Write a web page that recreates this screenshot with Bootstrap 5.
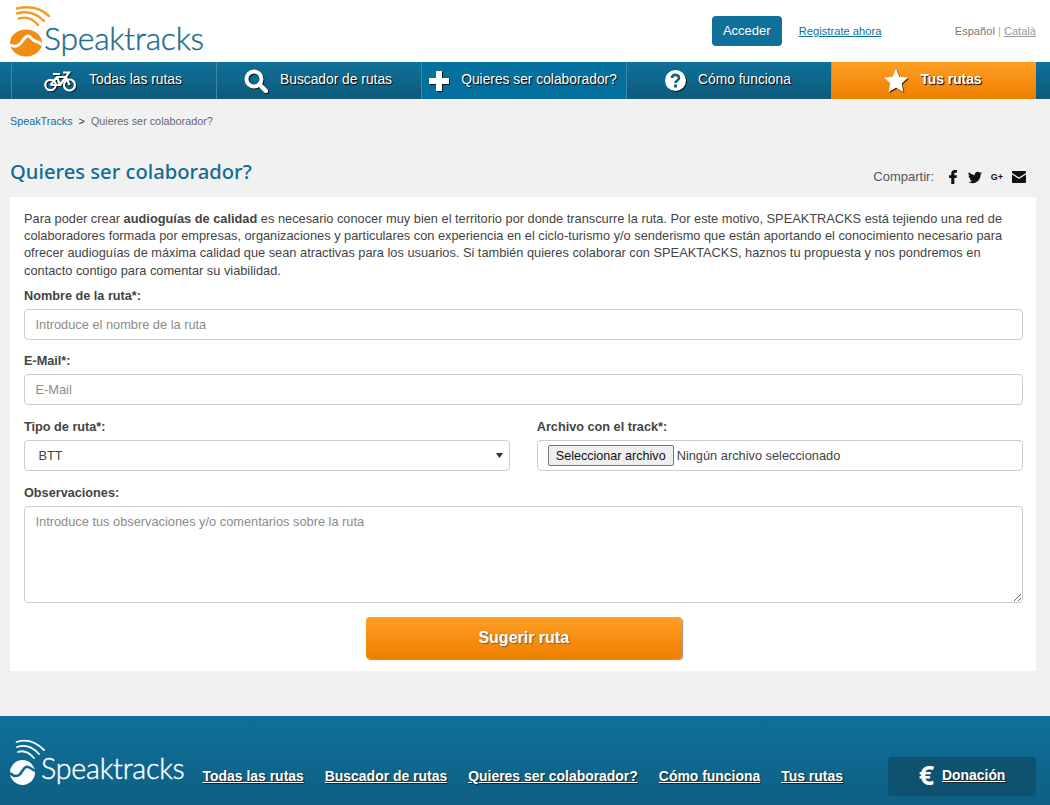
<!DOCTYPE html>
<html lang="es">
<head>
    <meta charset="UTF-8">
    <meta name="viewport" content="width=device-width, initial-scale=1.0">
    <title>Quieres ser colaborador?</title>
    <link href="https://cdn.jsdelivr.net/npm/bootstrap@5.3.0/dist/css/bootstrap.min.css" rel="stylesheet">
    <style>
        body { background: #f1f1f1; font-family: "Liberation Sans", Arial, sans-serif; font-size: 12.8px; color: #444; }
        .top-head { height: 62px; background: #fff; padding: 0 14px 0 10px; }
        .logo-box { color: #1c6d8f; height: 62px; padding-top: 3px; }
        .logo-word { font-family: Lato, sans-serif; font-weight: 300; font-size: 31.8px; line-height: 1; letter-spacing: -.2px; margin-left: 1px; margin-bottom: 7px; -webkit-text-stroke: .4px currentColor; }
        .logo-mark { width: 33px; height: 56px; overflow: visible; }
        .btn-enter { background: #0f7099; color: #fff; font-size: 13px; width: 70px; height: 30px; padding: 0; border: 0; border-radius: 4px; }
        .reg-link { color: #0f7099; font-size: 11.2px; margin-left: 17px; width: 156px; }
        .lang-box { font-size: 11.1px; color: #777; }
        .lang-box a { color: #999; }
        .lang-box span { color: #f0a040; }
        .main-nav { height: 37px; padding-left: 11px; background: linear-gradient(#0f7099, #0e5a7a); }
        .main-nav a { width: 205px; padding-right: 2px; color: #fff; font-size: 13.8px; text-decoration: none; text-shadow: 1px 1px 1px #000; border-left: 1px solid #3c86a7; }
        .main-nav a span { margin-top: -1px; }
        .main-nav a.is-current { background: #04709f; }
        .main-nav a.is-orange { background: linear-gradient(#fe9f25, #ee7f00); font-weight: 700; border-left-color: #d98a20; }
        .main-nav svg { filter: drop-shadow(1px 1px 0 rgba(0,0,0,.75)); }
        .crumbs { padding: 14px 10px 0; height: 50px; }
        .crumbs .breadcrumb { --bs-breadcrumb-divider: ">"; --bs-breadcrumb-item-padding-x: 6px; --bs-breadcrumb-divider-color: #333; font-size: 10.8px; margin: 0; }
        .crumbs a { color: #0f7099; text-decoration: none; }
        .crumbs .active { color: #667; }
        .title-row { padding: 0 24px 0 10px; height: 48px; }
        .title-row h1 { font-family: "Noto Sans", sans-serif; font-size: 20.2px; font-weight: 500; color: #0f6d94; margin: 10px 0 0; }
        .share-box { color: #555; padding-top: 18px; font-size: 13px; }
        .share-box svg, .share-box b { color: #111; fill: #111; }
        .share-box b { font-size: 9px; width: 14px; text-align: center; padding-top: 1px; }
        .form-panel { background: #fff; margin: 0 14px 0 10px; padding: 13px 13.5px 12px 14px; }
        .form-panel p { line-height: 17.2px; margin: 0 0 9.4px; }
        .form-panel label { display: block; font-weight: 700; font-size: 12.7px; line-height: 17px; margin-bottom: 4px; }
        .form-panel .form-control, .form-panel .form-select { font-size: 12.8px; color: #444; border-color: #ccc; height: 31px; padding: 0 10.5px; border-radius: 4px; box-shadow: none; }
        .form-panel .form-control::placeholder { color: #8b8b8b; }
        .form-panel textarea.form-control { height: 97px; padding-top: 5px; resize: vertical; }
        .form-panel .form-select { padding-left: 13.5px; background-size: 7px 5px; background-position: right 6px center; background-image: url("data:image/svg+xml,%3csvg xmlns='http://www.w3.org/2000/svg' viewBox='0 0 7 5'%3e%3cpath fill='%23333' d='M0 0h7L3.5 5z'/%3e%3c/svg%3e"); }
        .gap-first { margin-bottom: 13px; }
        .gap-next { margin-bottom: 14px; }
        .file-box { padding: 0 0 0 10px !important; gap: 3px; }
        .file-btn { background: #efefef; border: 1px solid #767676; border-radius: 2px; font-size: 12.6px; color: #111; height: 21px; padding: 0 7px; line-height: 18px; }
        .form-panel .row { --bs-gutter-x: 27px; }
        .send-btn { width: 316px; height: 42px; background: linear-gradient(#fe9f25, #ee7f00); color: #fff; font-size: 16px; font-weight: 700; border: 0; border-radius: 4px; text-shadow: 1px 1px 1px #7a5a30; box-shadow: 1px 1px 1px #a98d70; margin: 14px 0 0 1px; }
        .site-foot { margin-top: 45px; height: 89px; background: linear-gradient(#0f7099, #0e5f83); padding: 0 14px 0 10px; color: #fff; }
        .foot-logo { color: #fff; padding-top: 21px; }
        .foot-logo .logo-mark { width: 36px; height: 48px; }
        .foot-logo .logo-word { font-size: 28.6px; margin: 0 0 3px -5px; }
        .foot-links { gap: 21px; padding-top: 52px; margin-left: 18px; }
        .foot-links a { color: #fff; font-weight: 700; font-size: 13.95px; line-height: 16px; text-shadow: 1px 1px 1px #222; }
        .donate-box { margin-left: auto; margin-top: 41px; width: 148px; height: 39px; background: #0f5270; border-radius: 4px; gap: 8px; }
        .donate-box span { font-size: 27px; font-weight: 700; line-height: 1; font-family: "Open Sans", sans-serif; margin-top: -4px; }
        .donate-box a { color: #fff; font-weight: 700; font-size: 13.9px; text-shadow: 1px 1px 1px #222; margin-top: -2px; }
    </style>
</head>
<body>

<header class="top-head d-flex align-items-center">
    <div class="logo-box d-flex align-items-end">
        <svg class="logo-mark" viewBox="0 0 33 56">
            <g fill="none" stroke="#f59a23" stroke-width="2.4" stroke-linecap="round">
                <path d="M7 2.500Q26 -2 39 10"/>
                <path d="M7 7.500Q22 3 34 15"/>
                <path d="M9 12.500Q20 9 28 19"/>
            </g>
            <ellipse cx="16" cy="37" rx="16" ry="13.500" fill="#f28c13"/>
            <path d="M0 39C4 41 7 41 10 38S15 30 18 30 22 34 25 35 30 36 32 39" fill="none" stroke="#fff" stroke-width="3"/>
        </svg>
        <span class="logo-word">Speaktracks</span>
    </div>
    <div class="ms-auto d-flex align-items-center">
        <button class="btn-enter">Acceder</button>
        <a href="#" class="reg-link">Registrate ahora</a>
        <div class="lang-box">Español <span>|</span> <a href="#">Català</a></div>
    </div>
</header>

<nav class="main-nav d-flex">
    <a href="#" class="d-flex align-items-center justify-content-center gap-2">
        <svg width="33" height="22" viewBox="0 0 33 22" fill="none" stroke="#fff" stroke-width="2.2"><circle cx="6.5" cy="15" r="5.200"/><circle cx="25.500" cy="15" r="5.500"/><path d="M6.500 15L13 7H22L25.500 15M13 7L16 15H6.500M16 15L22 7M9 4H16M19 2.500H25L22 7"/></svg>
        <span class="ms-1">Todas las rutas</span>
    </a>
    <a href="#" class="d-flex align-items-center justify-content-center gap-2">
        <svg width="24" height="24" viewBox="0 0 24 24" fill="none" stroke="#fff"><circle cx="10" cy="10" r="7.5" stroke-width="4"/><path d="M15.5 15.5L22 22" stroke-width="4.5" stroke-linecap="round"/></svg>
        <span class="ms-1">Buscador de rutas</span>
    </a>
    <a href="#" class="is-current d-flex align-items-center justify-content-center gap-2">
        <svg width="20" height="20" viewBox="0 0 20 20" fill="#fff"><path d="M7 0H13V7H20V13H13V20H7V13H0V7H7Z"/></svg>
        <span class="ms-1">Quieres ser colaborador?</span>
    </a>
    <a href="#" class="d-flex align-items-center justify-content-center gap-2">
        <svg width="21" height="21" viewBox="0 0 21 21"><circle cx="10.5" cy="10.5" r="10.5" fill="#fff"/><path d="M7 8C7 3.8 14 3.8 14 8C14 10.500 10.500 10.500 10.500 13" fill="none" stroke="#125f80" stroke-width="2.6"/><rect x="9" y="14.500" width="3" height="3" fill="#125f80"/></svg>
        <span class="ms-1">Cómo funciona</span>
    </a>
    <a href="#" class="is-orange d-flex align-items-center justify-content-center gap-2">
        <svg width="24" height="23" viewBox="0 0 24 23" fill="#fff"><path d="M12 0L15.500 7.700 24 8.700 17.700 14.400 19.400 23 12 18.700 4.600 23 6.300 14.400 0 8.700 8.500 7.700Z"/></svg>
        <span class="ms-1">Tus rutas</span>
    </a>
</nav>

<div class="crumbs">
    <ol class="breadcrumb">
        <li class="breadcrumb-item"><a href="#">SpeakTracks</a></li>
        <li class="breadcrumb-item active">Quieres ser colaborador?</li>
    </ol>
</div>

<div class="title-row d-flex justify-content-between">
    <h1>Quieres ser colaborador?</h1>
    <div class="share-box d-flex align-items-center gap-2 align-self-start">
        <span class="me-1">Compartir:</span>
        <svg width="14" height="14" viewBox="0 0 16 16"><path d="M6 16V9H3.500V6H6V4C6 1.500 7.500 0 10 0H12.500V3H10.800C9.800 3 9.500 3.500 9.500 4.300V6H12.500L12 9H9.500V16Z"/></svg>
        <svg width="14" height="14" viewBox="0 0 16 16"><path d="M5.026 15c6.038 0 9.341-5.003 9.341-9.334 0-.14 0-.282-.006-.422A6.685 6.685 0 0 0 16 3.542a6.658 6.658 0 0 1-1.889.518 3.301 3.301 0 0 0 1.447-1.817 6.533 6.533 0 0 1-2.087.793A3.286 3.286 0 0 0 7.875 6.03a9.325 9.325 0 0 1-6.767-3.429 3.289 3.289 0 0 0 1.018 4.382A3.323 3.323 0 0 1 .64 6.575v.045a3.288 3.288 0 0 0 2.632 3.218 3.203 3.203 0 0 1-.865.115 3.23 3.23 0 0 1-.614-.057 3.283 3.283 0 0 0 3.067 2.277A6.588 6.588 0 0 1 .78 13.58a6.32 6.32 0 0 1-.78-.045A9.344 9.344 0 0 0 5.026 15z"/></svg>
        <b>G+</b>
        <svg width="14" height="12" viewBox="0 0 14 12"><path d="M1 0H13C13.600 0 14 .4 14 1V2L7 6.500 0 2V1C0 .4.400 0 1 0ZM0 3.500L7 8 14 3.500V11C14 11.600 13.600 12 13 12H1C.4 12 0 11.600 0 11Z"/></svg>
    </div>
</div>

<main class="form-panel">
    <p>Para poder crear <strong>audioguías de calidad</strong> es necesario conocer muy bien el territorio por donde transcurre la ruta. Por este motivo, SPEAKTRACKS está tejiendo una red de colaboradores formada por empresas, organizaciones y particulares con experiencia en el ciclo-turismo y/o senderismo que están aportando el conocimiento necesario para ofrecer audioguías de máxima calidad que sean atractivas para los usuarios. Si también quieres colaborar con SPEAKTACKS, haznos tu propuesta y nos pondremos en contacto contigo para comentar su viabilidad.</p>
    <form>
        <div class="gap-first">
            <label for="nombre">Nombre de la ruta*:</label>
            <input id="nombre" class="form-control" type="text" placeholder="Introduce el nombre de la ruta">
        </div>
        <div class="gap-next">
            <label for="mail">E-Mail*:</label>
            <input id="mail" class="form-control" type="text" placeholder="E-Mail">
        </div>
        <div class="row gap-next">
            <div class="col-6">
                <label for="tipo">Tipo de ruta*:</label>
                <select id="tipo" class="form-select"><option>BTT</option></select>
            </div>
            <div class="col-6">
                <label>Archivo con el track*:</label>
                <div class="form-control file-box d-flex align-items-center">
                    <button type="button" class="file-btn">Seleccionar archivo</button>
                    <span>Ningún archivo seleccionado</span>
                </div>
            </div>
        </div>
        <div>
            <label for="obs">Observaciones:</label>
            <textarea id="obs" class="form-control" placeholder="Introduce tus observaciones y/o comentarios sobre la ruta"></textarea>
        </div>
        <div class="text-center">
            <button type="button" class="send-btn">Sugerir ruta</button>
        </div>
    </form>
</main>

<footer class="site-foot d-flex">
    <div class="foot-logo d-flex align-items-end align-self-start">
        <svg class="logo-mark" viewBox="0 0 36 48">
            <g fill="none" stroke="#fff" stroke-width="1.800" stroke-linecap="round">
                <path d="M6.500 5Q21 0 34 13"/>
                <path d="M7 10Q19 6 29 17"/>
                <path d="M8 15Q16 12 24 21"/>
            </g>
            <circle cx="12.500" cy="35.500" r="12.500" fill="#fff"/>
            <path d="M0 36C3 39 6 40 9 38S13 31 16 30 21 32 25 34" fill="none" stroke="#0f6890" stroke-width="2.500"/>
        </svg>
        <span class="logo-word">Speaktracks</span>
    </div>
    <div class="foot-links d-flex align-self-start">
        <a href="#">Todas las rutas</a>
        <a href="#">Buscador de rutas</a>
        <a href="#">Quieres ser colaborador?</a>
        <a href="#">Cómo funciona</a>
        <a href="#">Tus rutas</a>
    </div>
    <div class="donate-box d-flex align-items-center justify-content-center">
        <span>€</span>
        <a href="#">Donación</a>
    </div>
</footer>

<script src="https://cdn.jsdelivr.net/npm/bootstrap@5.3.0/dist/js/bootstrap.bundle.min.js"></script>
</body>
</html>
